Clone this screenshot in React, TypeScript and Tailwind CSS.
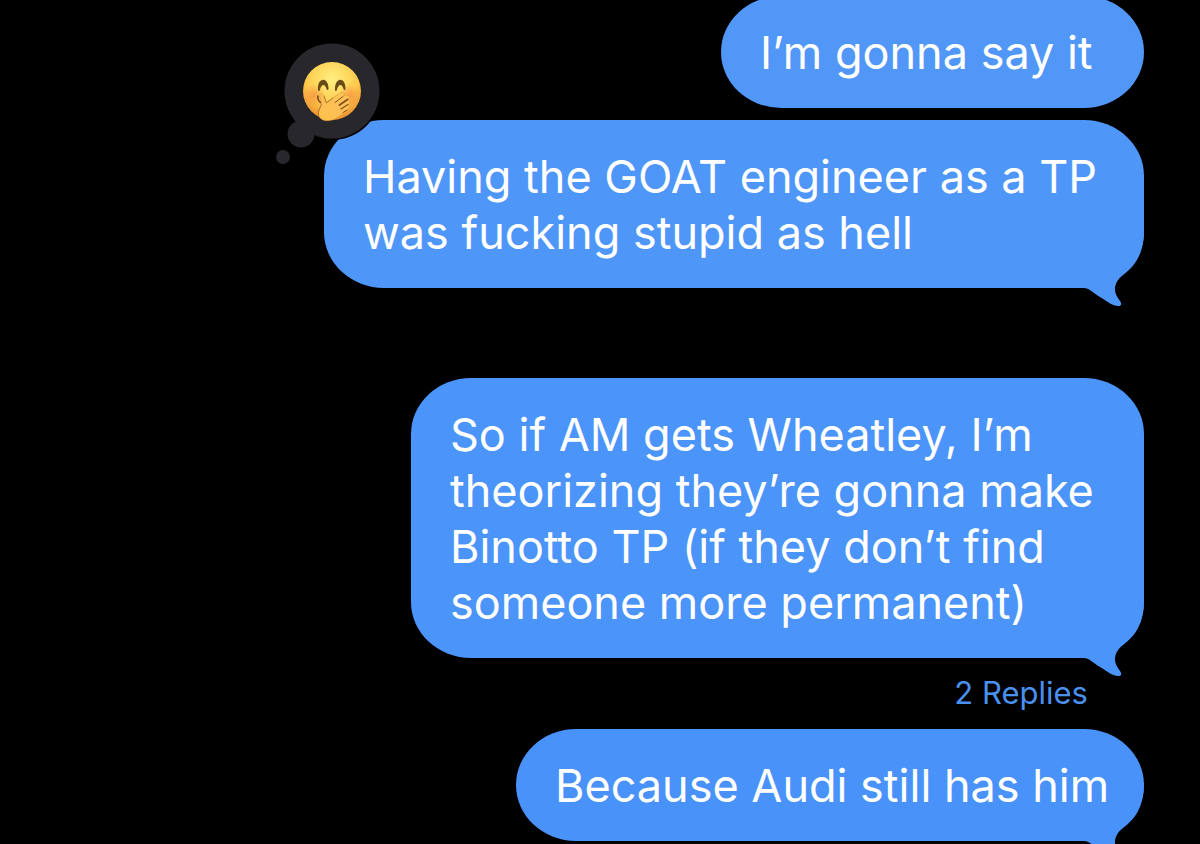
import type { ReactNode } from "react"
import { clsx } from "clsx"

// Little hook that hangs off the bottom right corner of a bubble
function Tail({ className }: { className: string }) {
  return (
    <svg
      viewBox="0 0 64 80"
      aria-hidden="true"
      className={clsx("absolute right-0 -bottom-[22px] h-20 w-16", className)}
    >
      <path
        fill="currentColor"
        d="M0 58H4C9 58 12 62 20 67C28 72 33 76 38 76C41.500 76 42 74 40 71C37 67 35 63 35 60C35 53 38 49 43 45C55 36 64 24 64 0H20L0 30Z"
      />
    </svg>
  )
}

type BubbleProps = {
  className: string
  tailClassName?: string
  children: ReactNode
}

function Bubble({ className, tailClassName, children }: BubbleProps) {
  return (
    <div
      className={clsx(
        "relative shrink-0 rounded-[60px/56px] pt-[29px] pb-[27px] pl-[39px] text-[45px] leading-14 text-white",
        className
      )}
    >
      {tailClassName && <Tail className={tailClassName} />}
      <div className="relative whitespace-nowrap">{children}</div>
    </div>
  )
}

// Tapback thought bubble with the hand-over-mouth face
function Reaction() {
  return (
    <svg
      viewBox="0 0 110 130"
      role="img"
      aria-label="Face with hand over mouth reaction"
      className="absolute -top-[109px] -left-[91px] h-[130px] w-[110px]"
    >
      <defs>
        <radialGradient id="face" cx="0.5" cy="0.3" r="0.72">
          <stop offset="0" stopColor="#fff083" />
          <stop offset="0.6" stopColor="#fdcb4c" />
          <stop offset="1" stopColor="#e98a2e" />
        </radialGradient>
        <radialGradient id="blush">
          <stop offset="0" stopColor="#f2703c" stopOpacity="0.5" />
          <stop offset="1" stopColor="#f2703c" stopOpacity="0" />
        </radialGradient>
        <linearGradient id="hand" x1="0.8" y1="0" x2="0.2" y2="1">
          <stop offset="0" stopColor="#fcc65a" />
          <stop offset="0.6" stopColor="#fbbf55" />
          <stop offset="1" stopColor="#fdc24c" />
        </linearGradient>
      </defs>
      <circle cx="60" cy="51" r="49" fill="#000" />
      <g fill="#28282c">
        <circle cx="60" cy="51" r="47.500" />
        <circle cx="29" cy="94" r="13.500" />
        <circle cx="11" cy="117" r="7" />
      </g>
      <circle cx="60" cy="51" r="29" fill="url(#face)" />
      <circle cx="42" cy="55" r="11" fill="url(#blush)" />
      <circle cx="78" cy="55" r="11" fill="url(#blush)" />
      <g fill="#6a4a17">
        <path d="M46 50C45 36.500 56.500 36.500 56.500 48.500C56.500 50.500 55 50.500 54.500 49C53 43.500 49.500 43.500 48 49.500C47.500 51.500 46.300 51.500 46 50Z" />
        <path d="M63 50C62.500 36.500 73.500 36.500 73.500 48.500C73.500 50.500 72 50.500 71.500 49C70 43.500 66.500 43.500 65 49.500C64.500 51.500 63.300 51.500 63 50Z" />
      </g>
      {/* mouth corner peeking out left of the thumb */}
      <path d="M46 56C45.500 59 46.500 61 48.500 62.500" fill="none" stroke="#7a4a17" strokeWidth="1.600" strokeLinecap="round" />
      <path
        fill="url(#hand)"
        stroke="#d98a30"
        strokeWidth="0.500"
        d="M48 55C48.500 53 51 53.500 51.500 55.500L54 62.500L68 53C71 51 73.500 53.500 71.500 56L75 55C77.500 55 78 57.500 76 59.500C78.500 60 78.500 63 76.500 64.500C78.500 66 77.500 68.500 75.500 70C72 73.500 68 76 64.500 78C58 82.500 48 81.500 46.500 75C45.500 70 50 66 49.500 61.500C49 59 47.500 57 48 55Z"
      />
      <g fill="none" stroke="#87501a" strokeLinecap="round">
        <path d="M52 56L54.500 63L61 58" strokeWidth="0.800" opacity="0.700" />
        <path d="M71 56.500L63 62.500" strokeWidth="1" />
        <path d="M75.500 59.500L67.500 65" strokeWidth="1.900" />
        <path d="M76 64.500L69 69" strokeWidth="1.300" />
        <path d="M75 70L71 72.500" strokeWidth="1" />
        <path d="M49.500 64C48.500 68 45.500 71 46.500 75" strokeWidth="0.800" opacity="0.700" />
      </g>
    </svg>
  )
}

export default function App() {
  return (
    <main className="flex h-screen flex-col items-end overflow-hidden bg-black pr-14 font-['Inter','Liberation_Sans',sans-serif]">
      <Bubble className="-mt-1 w-[423px] bg-[#5197f8]">
        <p>I’m gonna say it</p>
      </Bubble>

      <Bubble className="mt-3 w-[820px] bg-[#4f96f9]" tailClassName="text-[#4f96f9]">
        <p>
          Having the GOAT engineer as a TP
          <br />
          was fucking stupid as hell
        </p>
        <Reaction />
      </Bubble>

      <Bubble className="mt-[90px] w-[733px] bg-[#4b94f9]" tailClassName="text-[#4b94f9]">
        <p>
          So if AM gets Wheatley, I’m
          <br />
          theorizing they’re gonna make
          <br />
          Binotto TP (if they don’t find
          <br />
          someone more permanent)
        </p>
      </Bubble>

      <button type="button" className="mt-[15px] mr-14 h-10 shrink-0 text-[31px] leading-10 text-[#4a90f0]">
        2 Replies
      </button>

      <Bubble className="mt-4 w-[628px] bg-[#4892f9]" tailClassName="text-[#4892f9]">
        <p>Because Audi still has him</p>
      </Bubble>
    </main>
  )
}
